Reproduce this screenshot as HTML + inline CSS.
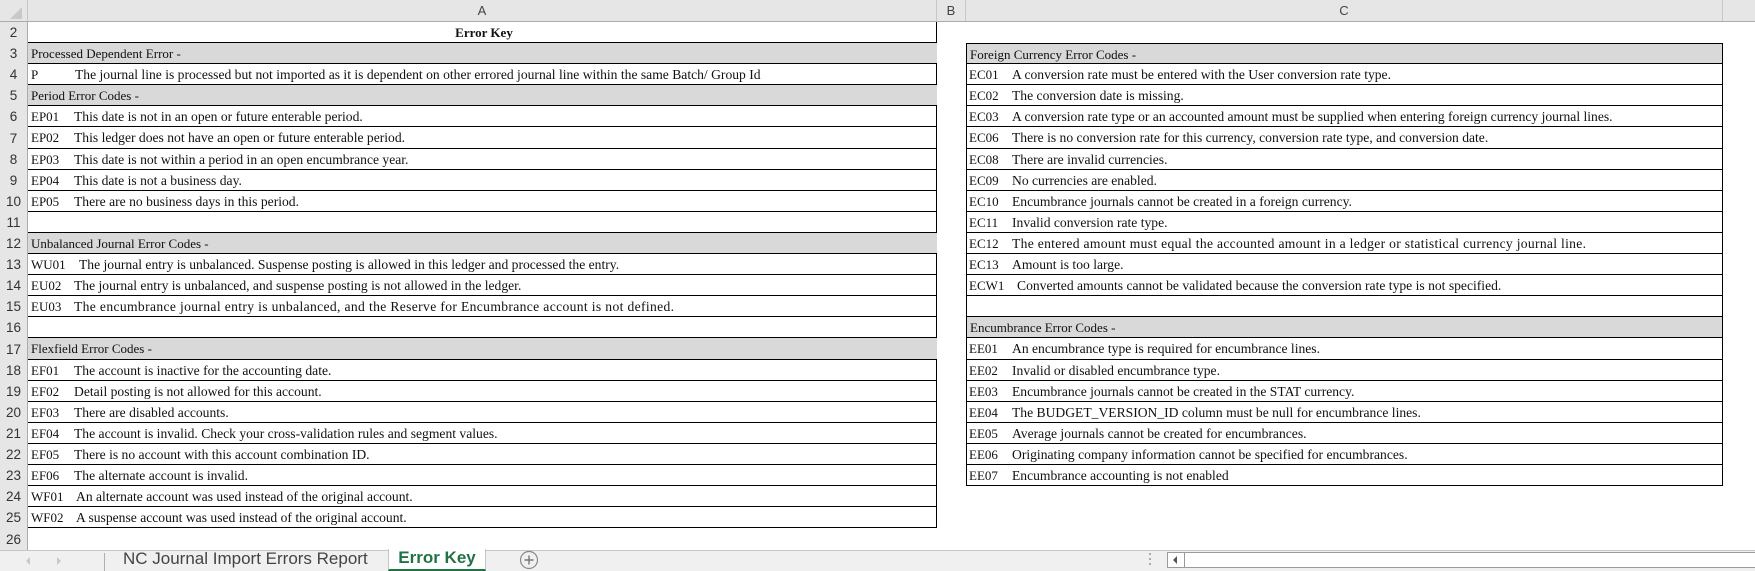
<!DOCTYPE html>
<html><head><meta charset="utf-8">
<style>
*{margin:0;padding:0;box-sizing:border-box}
body{width:1755px;height:571px;overflow:hidden;background:#fff;position:relative;font-family:"Liberation Serif",serif;font-size:13px;color:#111}
.ab{position:absolute}
.colh{position:absolute;top:0;height:22px;background:#e6e6e6;border-bottom:1px solid #ababab;border-right:1px solid #c6c6c6;font-family:"Liberation Sans",sans-serif;font-size:13px;color:#444;text-align:center;line-height:22px}
.rowh{position:absolute;left:0;width:28px;background:#e6e6e6;border-right:1px solid #ababab;font-family:"Liberation Sans",sans-serif;font-size:13.5px;color:#333;text-align:center;display:flex;align-items:center;justify-content:center}
.c{position:absolute;border-bottom:1px solid #000;white-space:nowrap;line-height:20px;padding-top:1px;padding-left:3px}
.g{background:#d9d9d9}
.k{display:inline-block;width:43px}
.k5{display:inline-block;width:48px}
.d{font-size:13.6px}
</style></head><body>
<div class="colh" style="left:0;width:28px"></div>
<svg class="ab" style="left:8px;top:6px" width="16" height="14"><polygon points="14,1 14,13 2,13" fill="#c8c8c8"/></svg>
<div class="colh" style="left:28px;width:909px">A</div>
<div class="colh" style="left:937px;width:29px">B</div>
<div class="colh" style="left:966px;width:757px">C</div>
<div class="colh" style="left:1723px;width:32px;border-right:none"></div>

<div class="rowh" style="top:22px;height:21px">2</div>
<div class="rowh" style="top:43px;height:21px">3</div>
<div class="rowh" style="top:64px;height:21px">4</div>
<div class="rowh" style="top:85px;height:21px">5</div>
<div class="rowh" style="top:106px;height:21px">6</div>
<div class="rowh" style="top:127px;height:22px">7</div>
<div class="rowh" style="top:149px;height:21px">8</div>
<div class="rowh" style="top:170px;height:21px">9</div>
<div class="rowh" style="top:191px;height:21px">10</div>
<div class="rowh" style="top:212px;height:21px">11</div>
<div class="rowh" style="top:233px;height:21px">12</div>
<div class="rowh" style="top:254px;height:21px">13</div>
<div class="rowh" style="top:275px;height:21px">14</div>
<div class="rowh" style="top:296px;height:21px">15</div>
<div class="rowh" style="top:317px;height:21px">16</div>
<div class="rowh" style="top:338px;height:22px">17</div>
<div class="rowh" style="top:360px;height:21px">18</div>
<div class="rowh" style="top:381px;height:21px">19</div>
<div class="rowh" style="top:402px;height:21px">20</div>
<div class="rowh" style="top:423px;height:21px">21</div>
<div class="rowh" style="top:444px;height:21px">22</div>
<div class="rowh" style="top:465px;height:21px">23</div>
<div class="rowh" style="top:486px;height:21px">24</div>
<div class="rowh" style="top:507px;height:21px">25</div>
<div class="rowh" style="top:528px;height:22px">26</div>

<!-- Column A -->
<div class="ab" style="left:936px;top:22px;width:1px;height:506px;background:#000"></div>
<div class="c" style="left:28px;top:22px;width:909px;height:21px;text-align:center;font-weight:bold">Error Key</div>
<div class="c g" style="left:28px;top:43px;width:909px;height:21px">Processed Dependent Error -</div>
<div class="c" style="left:28px;top:64px;width:909px;height:21px"><span class="k" style="width:44px">P</span><span class="d">The journal line is processed but not imported as it is dependent on other errored journal line within the same Batch/ Group Id</span></div>
<div class="c g" style="left:28px;top:85px;width:909px;height:21px">Period Error Codes -</div>
<div class="c" style="left:28px;top:106px;width:909px;height:21px"><span class="k">EP01</span><span class="d">This date is not in an open or future enterable period.</span></div>
<div class="c" style="left:28px;top:127px;width:909px;height:22px"><span class="k">EP02</span><span class="d">This ledger does not have an open or future enterable period.</span></div>
<div class="c" style="left:28px;top:149px;width:909px;height:21px"><span class="k">EP03</span><span class="d">This date is not within a period in an open encumbrance year.</span></div>
<div class="c" style="left:28px;top:170px;width:909px;height:21px"><span class="k">EP04</span><span class="d">This date is not a business day.</span></div>
<div class="c" style="left:28px;top:191px;width:909px;height:21px"><span class="k">EP05</span><span class="d">There are no business days in this period.</span></div>
<div class="c" style="left:28px;top:212px;width:909px;height:21px"></div>
<div class="c g" style="left:28px;top:233px;width:909px;height:21px">Unbalanced Journal Error Codes -</div>
<div class="c" style="left:28px;top:254px;width:909px;height:21px"><span class="k5">WU01</span><span class="d">The journal entry is unbalanced. Suspense posting is allowed in this ledger and processed the entry.</span></div>
<div class="c" style="left:28px;top:275px;width:909px;height:21px"><span class="k">EU02</span><span class="d">The journal entry is unbalanced, and suspense posting is not allowed in the ledger.</span></div>
<div class="c" style="left:28px;top:296px;width:909px;height:21px"><span class="k">EU03</span><span class="d" style="letter-spacing:0.35px">The encumbrance journal entry is unbalanced, and the Reserve for Encumbrance account is not defined.</span></div>
<div class="c" style="left:28px;top:317px;width:909px;height:21px"></div>
<div class="c g" style="left:28px;top:338px;width:909px;height:22px">Flexfield Error Codes -</div>
<div class="c" style="left:28px;top:360px;width:909px;height:21px"><span class="k">EF01</span><span class="d">The account is inactive for the accounting date.</span></div>
<div class="c" style="left:28px;top:381px;width:909px;height:21px"><span class="k">EF02</span><span class="d">Detail posting is not allowed for this account.</span></div>
<div class="c" style="left:28px;top:402px;width:909px;height:21px"><span class="k">EF03</span><span class="d">There are disabled accounts.</span></div>
<div class="c" style="left:28px;top:423px;width:909px;height:21px"><span class="k">EF04</span><span class="d">The account is invalid. Check your cross-validation rules and segment values.</span></div>
<div class="c" style="left:28px;top:444px;width:909px;height:21px"><span class="k">EF05</span><span class="d">There is no account with this account combination ID.</span></div>
<div class="c" style="left:28px;top:465px;width:909px;height:21px"><span class="k">EF06</span><span class="d">The alternate account is invalid.</span></div>
<div class="c" style="left:28px;top:486px;width:909px;height:21px"><span class="k" style="width:45px">WF01</span><span class="d">An alternate account was used instead of the original account.</span></div>
<div class="c" style="left:28px;top:507px;width:909px;height:21px"><span class="k" style="width:45px">WF02</span><span class="d">A suspense account was used instead of the original account.</span></div>

<!-- Column C box -->
<div class="ab" style="left:966px;top:43px;width:757px;height:443px;border:1px solid #000;border-bottom:none"></div>
<div class="c g" style="left:966px;top:43px;width:757px;height:21px;border-top:1px solid #000;border-left:1px solid #000;border-right:1px solid #000">Foreign Currency Error Codes -</div>
<div class="c" style="left:966px;top:64px;width:757px;height:21px"><span class="k">EC01</span><span class="d">A conversion rate must be entered with the User conversion rate type.</span></div>
<div class="c" style="left:966px;top:85px;width:757px;height:21px"><span class="k">EC02</span><span class="d">The conversion date is missing.</span></div>
<div class="c" style="left:966px;top:106px;width:757px;height:21px"><span class="k">EC03</span><span class="d">A conversion rate type or an accounted amount must be supplied when entering foreign currency journal lines.</span></div>
<div class="c" style="left:966px;top:127px;width:757px;height:22px"><span class="k">EC06</span><span class="d">There is no conversion rate for this currency, conversion rate type, and conversion date.</span></div>
<div class="c" style="left:966px;top:149px;width:757px;height:21px"><span class="k">EC08</span><span class="d">There are invalid currencies.</span></div>
<div class="c" style="left:966px;top:170px;width:757px;height:21px"><span class="k">EC09</span><span class="d">No currencies are enabled.</span></div>
<div class="c" style="left:966px;top:191px;width:757px;height:21px"><span class="k">EC10</span><span class="d">Encumbrance journals cannot be created in a foreign currency.</span></div>
<div class="c" style="left:966px;top:212px;width:757px;height:21px"><span class="k">EC11</span><span class="d">Invalid conversion rate type.</span></div>
<div class="c" style="left:966px;top:233px;width:757px;height:21px"><span class="k">EC12</span><span class="d" style="letter-spacing:0.3px">The entered amount must equal the accounted amount in a ledger or statistical currency journal line.</span></div>
<div class="c" style="left:966px;top:254px;width:757px;height:21px"><span class="k">EC13</span><span class="d">Amount is too large.</span></div>
<div class="c" style="left:966px;top:275px;width:757px;height:21px"><span class="k5">ECW1</span><span class="d">Converted amounts cannot be validated because the conversion rate type is not specified.</span></div>
<div class="c" style="left:966px;top:296px;width:757px;height:21px"></div>
<div class="c g" style="left:966px;top:317px;width:757px;height:21px;border-left:1px solid #000;border-right:1px solid #000">Encumbrance Error Codes -</div>
<div class="c" style="left:966px;top:338px;width:757px;height:22px"><span class="k">EE01</span><span class="d">An encumbrance type is required for encumbrance lines.</span></div>
<div class="c" style="left:966px;top:360px;width:757px;height:21px"><span class="k">EE02</span><span class="d">Invalid or disabled encumbrance type.</span></div>
<div class="c" style="left:966px;top:381px;width:757px;height:21px"><span class="k">EE03</span><span class="d">Encumbrance journals cannot be created in the STAT currency.</span></div>
<div class="c" style="left:966px;top:402px;width:757px;height:21px"><span class="k">EE04</span><span class="d">The BUDGET_VERSION_ID column must be null for encumbrance lines.</span></div>
<div class="c" style="left:966px;top:423px;width:757px;height:21px"><span class="k">EE05</span><span class="d">Average journals cannot be created for encumbrances.</span></div>
<div class="c" style="left:966px;top:444px;width:757px;height:21px"><span class="k">EE06</span><span class="d">Originating company information cannot be specified for encumbrances.</span></div>
<div class="c" style="left:966px;top:465px;width:757px;height:21px"><span class="k">EE07</span><span class="d">Encumbrance accounting is not enabled</span></div>

<!-- Tab bar -->
<div class="ab" style="left:0;top:550px;width:1755px;height:21px;background:#f0f0f0;border-top:1px solid #c6c6c6"></div>
<div class="ab" style="left:26px;top:557px;width:0;height:0;border-top:4px solid transparent;border-bottom:4px solid transparent;border-right:4px solid #c8c8c8"></div>
<div class="ab" style="left:57px;top:557px;width:0;height:0;border-top:4px solid transparent;border-bottom:4px solid transparent;border-left:4px solid #c8c8c8"></div>
<div class="ab" style="left:104px;top:553px;width:1px;height:18px;background:#b0b0b0"></div>
<div class="ab" style="left:123px;top:548px;font-family:'Liberation Sans',sans-serif;font-size:17px;color:#444;line-height:22px;white-space:nowrap">NC Journal Import Errors Report</div>
<div class="ab" style="left:388px;top:549px;width:98px;height:22px;background:#fff;border-left:1px solid #c6c6c6;border-right:1px solid #c6c6c6;border-bottom:2px solid #217346"></div>
<div class="ab" style="left:388px;top:547px;width:98px;text-align:center;font-family:'Liberation Sans',sans-serif;font-size:17px;font-weight:bold;color:#217346;line-height:22px">Error Key</div>
<svg class="ab" style="left:519px;top:550px" width="20" height="20"><circle cx="10" cy="10" r="8.5" fill="none" stroke="#888" stroke-width="1.2"/><path d="M10 5.5V14.5M5.5 10H14.5" stroke="#777" stroke-width="1.4"/></svg>
<div class="ab" style="left:1149px;top:553px;width:2px;height:2px;background:#aaa"></div>
<div class="ab" style="left:1149px;top:558px;width:2px;height:2px;background:#aaa"></div>
<div class="ab" style="left:1149px;top:563px;width:2px;height:2px;background:#aaa"></div>
<div class="ab" style="left:1167px;top:552px;width:588px;height:16px;background:#fff;border:1px solid #9a9a9a;border-right:none"></div>
<div class="ab" style="left:1184px;top:552px;width:1px;height:16px;background:#9a9a9a"></div>
<div class="ab" style="left:1173px;top:556px;width:0;height:0;border-top:4px solid transparent;border-bottom:4px solid transparent;border-right:4px solid #555"></div>
</body></html>
